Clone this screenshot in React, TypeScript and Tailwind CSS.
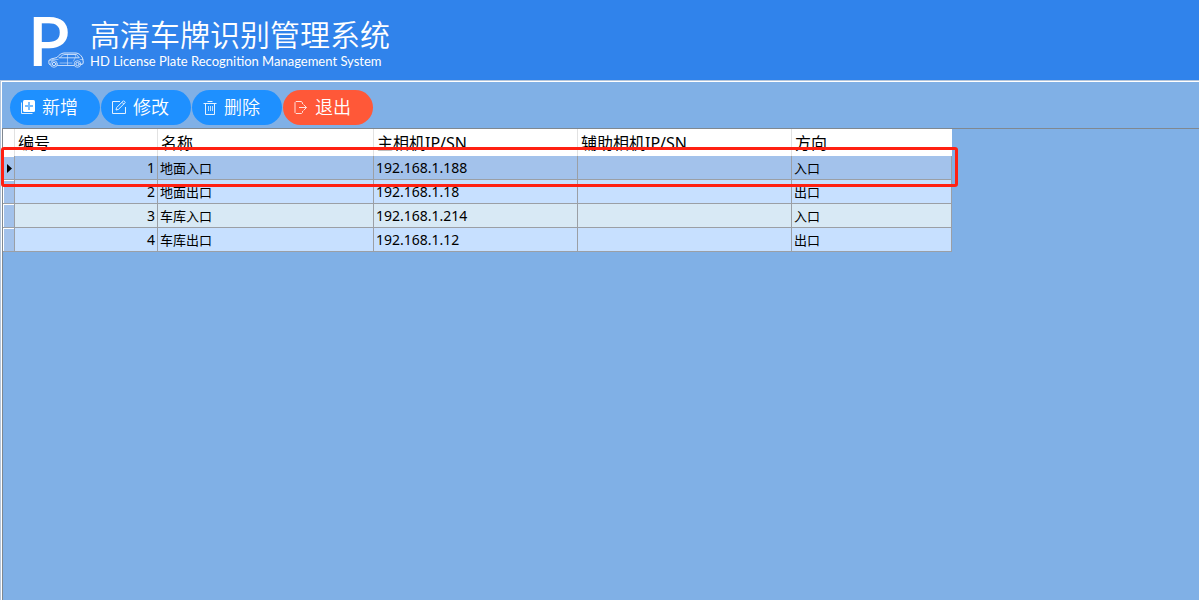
import React from 'react';

type Camera = { id: number; name: string; main: string; aux: string; direction: string };

const cameras: Camera[] = [
  { id: 1, name: '地面入口', main: '192.168.1.188', aux: '', direction: '入口' },
  { id: 2, name: '地面出口', main: '192.168.1.18', aux: '', direction: '出口' },
  { id: 3, name: '车库入口', main: '192.168.1.214', aux: '', direction: '入口' },
  { id: 4, name: '车库出口', main: '192.168.1.12', aux: '', direction: '出口' },
];

const columns = ['编号', '名称', '主相机IP/SN', '辅助相机IP/SN', '方向'];

function CarIcon() {
  return (
    <svg viewBox="0 0 36 16" className="h-4 w-9" fill="none" stroke="#d3e4fc" strokeLinejoin="round" strokeLinecap="round" aria-hidden="true">
      <path d="M2.5 13 1 12 .8 8.5 3 7 9 5.5C11 3 13 1.3 16 1H28C31 1.3 33 3 34.5 6L35.3 10 34.8 12 33 12.6" />
      <path d="M9.500 13.500H26M11 5.800H31M12 5.500C13.500 3.500 15 2.700 17 2.500H28.500L31 5.500" strokeWidth=".9" />
      <path d="M19.500 2.500V13M27 2.500 28 5.500M27 6 25.500 9M1.500 8.500H5M12 11H24M32 7.500H35M4 7.500H10" strokeWidth=".6" />
      <circle cx="6" cy="12" r="3.3" strokeWidth=".8" />
      <circle cx="6" cy="12" r="1.7" />
      <circle cx="29.5" cy="12" r="3.3" strokeWidth=".8" />
      <circle cx="29.5" cy="12" r="1.7" />
    </svg>
  );
}

function AddIcon() {
  return (
    <svg viewBox="0 0 16 16" className="size-4" aria-hidden="true">
      <path d="M1.5 3.5V14.5H12.5" fill="none" stroke="#d8ecff" />
      <rect x="3" y="1" width="12" height="12" rx="1.5" fill="#fff" />
      <path d="M9 3V11M5 7H13" stroke="#1e90ff" strokeWidth="2" opacity=".6" />
    </svg>
  );
}

function EditIcon() {
  return (
    <svg viewBox="0 0 16 16" className="size-4" fill="none" stroke="#e3f1ff" aria-hidden="true">
      <path d="M9 2.5H1.5V14.5H14.5V8" />
      <path d="M5 11 5.6 8.6 12.5 1.7 14.3 3.5 7.4 10.4ZM11 3.3 12.8 5.1" />
    </svg>
  );
}

function DeleteIcon() {
  return (
    <svg viewBox="0 0 16 16" className="size-4" fill="none" stroke="#e3f1ff" aria-hidden="true">
      <path d="M1.500 4.500H14.500M5.500 2.500H10.500M3.500 4.500V15.500H12.500V4.500" />
      <path d="M6.500 7V12M8.500 7V12M10.500 7V12" strokeWidth=".8" />
    </svg>
  );
}

function ExitIcon() {
  return (
    <svg viewBox="0 0 16 16" className="size-4" fill="none" stroke="#ffe0da" aria-hidden="true">
      <path d="M9.5 5V4L8.5 2.500H3L2 3.500V13.5L3 14.5H8.5L9.5 13.5V12" />
      <path d="M6 8.500H13.5M10.5 5.500 13.5 8.500 10.5 11.500" />
    </svg>
  );
}

const actions = [
  { label: '新增', Icon: AddIcon, color: 'bg-[#1e90ff]' },
  { label: '修改', Icon: EditIcon, color: 'bg-[#1e90ff]' },
  { label: '删除', Icon: DeleteIcon, color: 'bg-[#1e90ff]' },
  { label: '退出', Icon: ExitIcon, color: 'bg-[#ff5838]' },
];

export default function App() {
  return (
    <div className="flex min-h-screen flex-col bg-[#80b0e6] font-['Noto_Sans','Noto_Sans_CJK_SC',sans-serif] text-black">
      <header className="flex h-20 shrink-0 items-center bg-[#3083eb] pl-7 text-white">
        <div className="relative mr-1 w-[58px] font-[Lato,sans-serif]">
          <span className="block text-[68px] leading-20 font-semibold">P</span>
          <div className="absolute bottom-3 left-5">
            <CarIcon />
          </div>
        </div>
        <div className="pt-0.5">
          <h1 className="font-['Noto_Sans_CJK_SC',sans-serif] text-[30px] leading-10 font-[350]">高清车牌识别管理系统</h1>
          <p className="font-[Lato,sans-serif] text-[13px] leading-4">HD License Plate Recognition Management System</p>
        </div>
      </header>

      <main className="flex grow flex-col border-t border-l border-[#b4c6dc]">
        <div className="flex grow flex-col border-t border-l border-white">
          <nav className="flex h-[46px] shrink-0 items-center gap-px pt-1 pl-2">
            {actions.map(({ label, Icon, color }) => (
              <button key={label} type="button" className={`flex h-[35px] w-[90px] items-center gap-1.5 rounded-full pl-2.5 text-[18px] leading-6 font-[350] text-white ${color}`}>
                <Icon />
                {label}
              </button>
            ))}
          </nav>

          <section className="grow border-t border-l border-[#808890]">
            <div className="relative w-fit">
              <table className="table-fixed border-separate border-spacing-0 text-left text-[13px] leading-5">
                <colgroup>
                  <col className="w-[12px]" />
                  <col className="w-[143px]" />
                  <col className="w-[216px]" />
                  <col className="w-[204px]" />
                  <col className="w-[214px]" />
                  <col className="w-[160px]" />
                </colgroup>
                <thead>
                  <tr className="h-[27px] bg-white text-[16px]">
                    <th className="border-r border-[#e2e2e2] p-0" />
                    {columns.map((c) => (
                      <th key={c} className="border-r border-[#e2e2e2] py-0 pr-0 pl-[3px] font-normal last:border-white">{c}</th>
                    ))}
                  </tr>
                </thead>
                <tbody>
                  {cameras.map((c) => (
                    <tr
                      key={c.id}
                      className="h-6 bg-[#c7e0ff] first:bg-[#a3c2eb] nth-3:bg-[#d8e9f5] [&>td]:border-r [&>td]:border-b [&>td]:border-[#9b9fa5] [&>td]:px-0.5 [&>td]:py-0"
                    >
                      <td>
                        <div className="-mx-0.5 flex h-[23px] items-center border-t border-l border-white bg-[#a3c2eb] pl-[3px]">
                          {c.id === 1 && (
                            <svg viewBox="0 0 5 9" className="h-[9px] w-[5px]" aria-hidden="true">
                              <path d="M0 0 5 4.5 0 9Z" />
                            </svg>
                          )}
                        </div>
                      </td>
                      <td className="text-right text-[14px]">{c.id}</td>
                      <td>{c.name}</td>
                      <td className="text-[14px]">{c.main}</td>
                      <td>{c.aux}</td>
                      <td>{c.direction}</td>
                    </tr>
                  ))}
                </tbody>
              </table>
              <div className="pointer-events-none absolute top-[18px] -right-1.5 -left-0.5 h-10 rounded-[3px] border-3 border-[#ff2012]" />
            </div>
          </section>
        </div>
      </main>
    </div>
  );
}
